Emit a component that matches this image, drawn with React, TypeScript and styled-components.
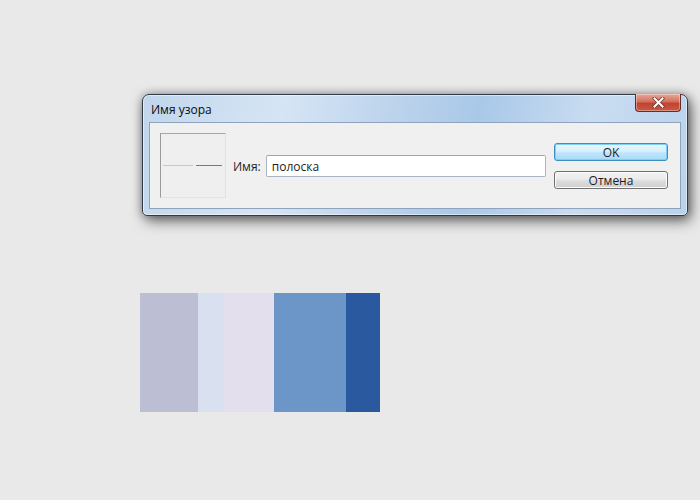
import React from 'react'
import styled, { createGlobalStyle } from 'styled-components'

const GlobalStyle = createGlobalStyle`
  html, body {
    margin: 0;
    background: #e9e9e9;
  }
  body {
    font-family: "Open Sans", "Noto Sans", "Liberation Sans", sans-serif;
    font-size: 12px;
    color: #1e1e1e;
  }
`

const Page = styled.div`
  width: 700px;
  height: 500px;
  padding: 94px 0 0 140px;
  box-sizing: border-box;
`

const Window = styled.div`
  width: 546px;
  height: 122px;
  margin-left: 2px;
  box-sizing: border-box;
  border: 1px solid #2f3b48;
  border-radius: 7px 7px 5px 5px;
  background: linear-gradient(100deg, #c1d6ec 0%, #d6e5f5 25%, #bcd3ec 45%, #a9c8e8 60%, #c9dcf1 80%, #bad2ec 100%);
  box-shadow: 0 0 0 1px rgba(255, 255, 255, 0.5) inset, 3px 5px 14px rgba(0, 0, 0, 0.55), 0 0 8px rgba(0, 0, 0, 0.3);
  display: flex;
  flex-direction: column;
  padding: 0 6px 6px 6px;
`

const TitleBar = styled.div`
  height: 27px;
  display: flex;
  align-items: flex-start;
  justify-content: space-between;
`

const Title = styled.span`
  margin-top: 6px;
  margin-left: 2px;
  font-size: 12px;
  color: #0a0a0a;
`

const CloseButton = styled.div`
  width: 46px;
  height: 18px;
  margin-top: -1px;
  box-sizing: border-box;
  border: 1px solid #6b2a22;
  border-top: none;
  border-radius: 0 0 4px 4px;
  background: linear-gradient(#e6a99b 0%, #d66f5c 45%, #c04430 55%, #c85a43 100%);
  box-shadow: 0 0 0 1px rgba(255, 255, 255, 0.35) inset;
  display: flex;
  align-items: center;
  justify-content: center;
`

const Client = styled.div`
  flex: 1;
  border: 1px solid #8fa3bd;
  background: #f0f0f0;
  display: flex;
  align-items: flex-start;
  padding: 10px 12px 0 10px;
`

const Preview = styled.div`
  width: 66px;
  height: 65px;
  box-sizing: border-box;
  border-left: 1px solid #9a9a9a;
  border-top: 1px solid #a8a8a8;
  border-right: 1px solid #e2e2e2;
  border-bottom: 1px solid #e2e2e2;
  background: #efefef;
  display: flex;
  align-items: center;
  padding: 0 3px 0 2px;
  gap: 3px;
`

const Line = styled.div<{ $color: string; $w: number }>`
  height: 1px;
  width: ${(p) => p.$w}px;
  background: ${(p) => p.$color};
`

const Field = styled.div`
  display: flex;
  align-items: center;
  margin-top: 22px;
  margin-left: 7px;
  gap: 5px;
`

const Label = styled.label`
  font-size: 12px;
  color: #1e1e1e;
`

const Input = styled.div`
  width: 280px;
  height: 22px;
  box-sizing: border-box;
  border: 1px solid #abb4c2;
  border-top-color: #9aa6b7;
  border-radius: 2px;
  background: #fff;
  padding: 0 5px;
  display: flex;
  align-items: center;
  font-size: 12px;
`

const Buttons = styled.div`
  margin-left: auto;
  margin-top: 10px;
  display: flex;
  flex-direction: column;
  gap: 10px;
`

const Button = styled.div<{ $default?: boolean }>`
  width: 114px;
  height: 18px;
  box-sizing: border-box;
  border: 1px solid ${(p) => (p.$default ? '#3c8fbf' : '#707070')};
  border-radius: 3px;
  background: ${(p) =>
    p.$default
      ? 'linear-gradient(#eaf6fd 0%, #d9f0fc 45%, #bee6fd 55%, #a7d9f5 100%)'
      : 'linear-gradient(#f2f2f2 0%, #ebebeb 45%, #dddddd 55%, #cfcfcf 100%)'};
  box-shadow: ${(p) => (p.$default ? '0 0 0 1px #7fd0f5 inset' : '0 0 0 1px #fcfcfc inset')};
  display: flex;
  align-items: center;
  justify-content: center;
  font-size: 12px;
  color: #1e1e1e;
`

const Swatches = styled.div`
  display: flex;
  margin-top: 77px;
  height: 119px;
`

const Swatch = styled.div<{ $color: string; $w: number }>`
  width: ${(p) => p.$w}px;
  background: ${(p) => p.$color};
`

const swatches = [
  { color: '#bcbfd3', w: 58 },
  { color: '#d9e0ef', w: 26 },
  { color: '#e3dfec', w: 50 },
  { color: '#6d96c8', w: 72 },
  { color: '#2b59a0', w: 34 },
]

export default function App() {
  return (
    <>
      <GlobalStyle />
      <Page>
        <Window>
          <TitleBar>
            <Title>Имя узора</Title>
            <CloseButton>
              <svg width="13" height="11" viewBox="0 0 13 11">
                <path d="M2.5 1.5 L10.5 9.5 M10.5 1.5 L2.5 9.5" stroke="#6a3a30" strokeWidth="3.6" strokeLinecap="square" />
                <path d="M2.5 1.5 L10.5 9.5 M10.5 1.5 L2.5 9.5" stroke="#ffffff" strokeWidth="2" strokeLinecap="square" />
              </svg>
            </CloseButton>
          </TitleBar>
          <Client>
            <Preview>
              <Line $color="#c6c8d0" $w={30} />
              <Line $color="#5b7db0" $w={26} />
            </Preview>
            <Field>
              <Label>Имя:</Label>
              <Input>полоска</Input>
            </Field>
            <Buttons>
              <Button $default>OK</Button>
              <Button>Отмена</Button>
            </Buttons>
          </Client>
        </Window>
        <Swatches>
          {swatches.map((s, i) => (
            <Swatch key={i} $color={s.color} $w={s.w} />
          ))}
        </Swatches>
      </Page>
    </>
  )
}
